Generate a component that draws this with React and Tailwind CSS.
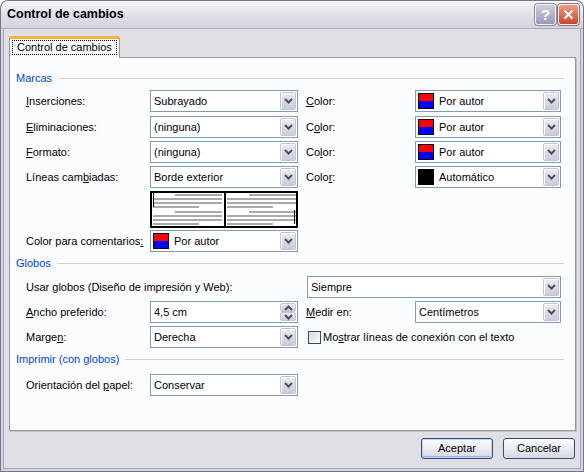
import React from 'react';

function Chevron({ up }) {
    return (
        <svg width="9" height="6" viewBox="0 0 9 6" className={up ? 'rotate-180' : ''}>
            <path d="M1 1l3.5 3.5L8 1" fill="none" stroke="#4d4d66" strokeWidth="2" />
        </svg>
    );
}

function DropBtn() {
    return (
        <div className="my-px mr-px flex w-[16px] shrink-0 items-center justify-center self-stretch rounded-[2px] border border-[#c4c4d4] bg-linear-to-b from-[#ececf2] to-[#cbcbd9] shadow-[inset_1px_1px_0_#ffffff]">
            <Chevron />
        </div>
    );
}

function Swatch({ kind }) {
    if (kind === 'black') return <span className="mr-[5px] h-[16px] w-[16px] shrink-0 border border-black bg-black" />;
    return (
        <span className="mr-[5px] flex h-[16px] w-[16px] shrink-0 flex-col border border-black">
            <span className="flex-1 bg-[#ff0000]" />
            <span className="flex-1 bg-[#0000ff]" />
        </span>
    );
}

function Combo({ className, swatch, children }) {
    return (
        <div className={`flex h-[22px] shrink-0 items-stretch border border-[#7f9db9] bg-white ${className}`}>
            <div className={`flex flex-1 items-center ${swatch ? 'pl-[2px]' : 'pl-[3px]'}`}>
                {swatch && <Swatch kind={swatch} />}
                <span>{children}</span>
            </div>
            <DropBtn />
        </div>
    );
}

function Spin({ className, children }) {
    return (
        <div className={`flex h-[22px] shrink-0 items-stretch border border-[#7f9db9] bg-white ${className}`}>
            <div className="flex flex-1 items-center pl-[3px]">{children}</div>
            <div className="my-px mr-px flex w-[16px] flex-col">
                <div className="flex flex-1 items-center justify-center rounded-[2px] border border-[#c4c4d4] bg-linear-to-b from-[#ececf2] to-[#cbcbd9]"><Chevron up /></div>
                <div className="flex flex-1 items-center justify-center rounded-[2px] border border-[#c4c4d4] bg-linear-to-b from-[#ececf2] to-[#cbcbd9]"><Chevron /></div>
            </div>
        </div>
    );
}

function Header({ children }) {
    return (
        <div className="flex h-[14px] items-center">
            <span className="text-[#0046d5]">{children}</span>
            <span className="ml-[6px] h-px flex-1 bg-[#d0d0d8]" />
        </div>
    );
}

function Preview() {
    const page = (dx, barX, barY) => (
        <g>
            {[3, 20].map((y0) => (
                <g key={y0} fill="#aaaaaa">
                    <rect x={25 + dx} y={y0} width={47} height={2} />
                    <rect x={3 + dx} y={y0 + 4} width={69} height={2} />
                    <rect x={3 + dx} y={y0 + 8} width={69} height={2} />
                    <rect x={3 + dx} y={y0 + 12} width={46} height={2} />
                </g>
            ))}
            <rect x={barX} y={barY} width={1} height={14} fill="#000" />
        </g>
    );
    return (
        <svg width="148" height="37" viewBox="0 0 148 37" className="mt-[3px] ml-[124px] block">
            <rect x="0" y="0" width="148" height="37" fill="#ffffff" />
            {page(0, 3, 2)}
            {page(74, 144, 19)}
            <rect x="1" y="1" width="146" height="35" fill="none" stroke="#000" strokeWidth="2" />
            <rect x="74" y="0" width="2" height="37" fill="#000" />
        </svg>
    );
}

const ROW = 'flex h-[22px] items-center';

export default function App() {
    return (
        <div className="h-[472px] w-[584px] overflow-hidden rounded-t-[8px] bg-[#75758d] p-px font-['Liberation_Sans',Arial,sans-serif] text-[11px] leading-[13px] text-black">
            <div className="flex h-full flex-col">
                {/* title bar */}
                <div className="flex h-[28px] shrink-0 items-center rounded-t-[7px] border-b border-[#a9a9bd] bg-linear-to-b from-[#f6f6f9] via-[#e2e2ea] to-[#d3d3de] pl-[6px] pr-[4px]">
                    <span className="flex-1 text-[12.5px] font-bold">Control de cambios</span>
                    <div className="flex h-[21px] w-[21px] items-center justify-center rounded-[3px] border border-[#f4f4f8] bg-linear-to-b from-[#d0d0e0] to-[#9a9ab4] text-[15px] font-bold text-white shadow-[0_0_0_1px_#8c8ca4]">?</div>
                    <div className="ml-[2px] flex h-[21px] w-[21px] items-center justify-center rounded-[3px] border border-[#f8f2f0] bg-linear-to-b from-[#ec9c86] to-[#c8462a] shadow-[0_0_0_1px_#a86a66]">
                        <svg width="11" height="11" viewBox="0 0 11 11"><path d="M1.5 1.5l8 8M9.5 1.5l-8 8" stroke="#ffffff" strokeWidth="2" /></svg>
                    </div>
                </div>

                {/* body */}
                <div className="flex flex-1 flex-col border-x-2 border-b-2 border-[#d6d6e2]">
                    <div className="flex flex-1 flex-col border-x border-b border-[#a4a4b8] bg-[#e0dfe3] pl-[5px] pr-[4px] pt-[7px]">
                        {/* tab */}
                        <div className="relative z-10 -mb-px flex h-[22px] w-fit flex-col rounded-t-[3px] border-x border-t-[3px] border-x-[#919b9c] border-t-[#f5b336] bg-[#fcfcfe] px-[2px]">
                            <span className="mt-px flex h-[15px] items-center whitespace-nowrap border border-dotted border-black px-[4px]">Control de cambios</span>
                        </div>

                        {/* panel */}
                        <div className="flex h-[374px] flex-col border border-[#919b9c] bg-[#fbfcfe] pl-[6px] pr-[11px] pt-[13px] shadow-[1px_1px_0_#c4c4cf]">
                            <Header>Marcas</Header>
                            <div className="mt-[5px] flex flex-col gap-[3px] pl-[10px]">
                                <div className={ROW}>
                                    <span className="w-[124px] shrink-0"><u>I</u>nserciones:</span>
                                    <Combo className="w-[148px]">Subrayado</Combo>
                                    <span className="ml-[8px] w-[109px] shrink-0"><u>C</u>olor:</span>
                                    <Combo className="w-[146px]" swatch="rb">Por autor</Combo>
                                </div>
                                <div className={`${ROW} mt-px`}>
                                    <span className="w-[124px] shrink-0"><u>E</u>liminaciones:</span>
                                    <Combo className="w-[148px]">(ninguna)</Combo>
                                    <span className="ml-[8px] w-[109px] shrink-0">C<u>o</u>lor:</span>
                                    <Combo className="w-[146px]" swatch="rb">Por autor</Combo>
                                </div>
                                <div className={ROW}>
                                    <span className="w-[124px] shrink-0"><u>F</u>ormato:</span>
                                    <Combo className="w-[148px]">(ninguna)</Combo>
                                    <span className="ml-[8px] w-[109px] shrink-0">Co<u>l</u>or:</span>
                                    <Combo className="w-[146px]" swatch="rb">Por autor</Combo>
                                </div>
                                <div className={ROW}>
                                    <span className="w-[124px] shrink-0">Líneas cam<u>b</u>iadas:</span>
                                    <Combo className="w-[148px]">Borde exterior</Combo>
                                    <span className="ml-[8px] w-[109px] shrink-0">Colo<u>r</u>:</span>
                                    <Combo className="w-[146px]" swatch="black">Automático</Combo>
                                </div>
                            </div>
                            <div className="pl-[10px]">
                                <Preview />
                                <div className={`${ROW} mt-[2px]`}>
                                    <span className="w-[124px] shrink-0">Color para comentarios<u>:</u></span>
                                    <Combo className="w-[148px]" swatch="rb">Por autor</Combo>
                                </div>
                            </div>

                            <div className="mt-[4px]"><Header>Globos</Header></div>
                            <div className="mt-[6px] flex flex-col gap-[3px] pl-[10px]">
                                <div className={ROW}>
                                    <span className="w-[281px] shrink-0">Usar <u>g</u>lobos (Diseño de impresión y Web):</span>
                                    <Combo className="w-[254px]">Siempre</Combo>
                                </div>
                                <div className={ROW}>
                                    <span className="w-[124px] shrink-0"><u>A</u>ncho preferido:</span>
                                    <Spin className="w-[148px]">4,5 cm</Spin>
                                    <span className="ml-[8px] w-[109px] shrink-0"><u>M</u>edir en:</span>
                                    <Combo className="w-[146px]">Centímetros</Combo>
                                </div>
                                <div className={ROW}>
                                    <span className="w-[124px] shrink-0">Marge<u>n</u>:</span>
                                    <Combo className="w-[148px]">Derecha</Combo>
                                    <span className="ml-[10px] h-[13px] w-[13px] shrink-0 border border-[#1c5180] bg-linear-to-br from-[#d6d6dc] to-[#ffffff]" />
                                    <span className="ml-[2px]">Mo<u>s</u>trar líneas de conexión con el texto</span>
                                </div>
                            </div>

                            <div className="mt-[4px]"><Header>Imprimir (con globos)</Header></div>
                            <div className="mt-[8px] flex flex-col pl-[10px]">
                                <div className={ROW}>
                                    <span className="w-[124px] shrink-0">Orientación del <u>p</u>apel:</span>
                                    <Combo className="w-[148px]">Conservar</Combo>
                                </div>
                            </div>
                        </div>

                        {/* buttons */}
                        <div className="mr-px mt-[7px] flex justify-end gap-[10px]">
                            <button className="h-[21px] w-[72px] rounded-[3px] border border-[#2f4f7f] bg-linear-to-b from-[#ffffff] to-[#d8d8e4] shadow-[inset_0_0_0_1px_#c6d4f4,inset_0_-2px_0_0_#9cb2ea]">Aceptar</button>
                            <button className="h-[21px] w-[72px] rounded-[3px] border border-[#2f4f7f] bg-linear-to-b from-[#ffffff] to-[#d8d8e4]">Cancelar</button>
                        </div>
                    </div>
                </div>
            </div>
        </div>
    );
}
